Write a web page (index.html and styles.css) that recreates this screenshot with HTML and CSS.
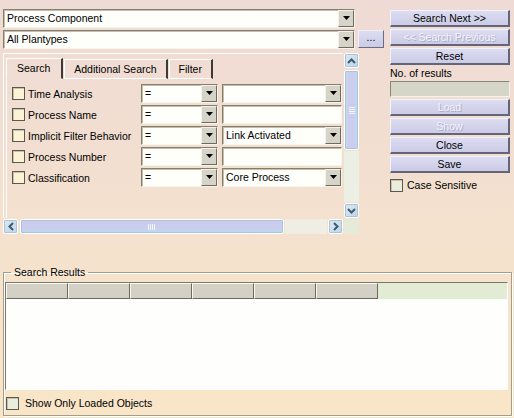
FILE: index.html
```html
<!DOCTYPE html>
<html>
<head>
<meta charset="utf-8">
<link rel="stylesheet" href="styles.css">
</head>
<body>
<div class="app">
  <div class="top">
    <div class="left">
      <div class="combo big">
        <span class="txt">Process Component</span>
        <span class="btn"><svg width="7" height="5" viewBox="0 0 7 5"><path d="M0 0H7L3.5 4Z" fill="#000"/></svg></span>
      </div>
      <div class="row2">
        <div class="combo big">
          <span class="txt">All Plantypes</span>
          <span class="btn"><svg width="7" height="5" viewBox="0 0 7 5"><path d="M0 0H7L3.5 4Z" fill="#000"/></svg></span>
        </div>
        <div class="dots">...</div>
      </div>
      <div class="tabarea">
        <div class="viewport">
          <div class="tabs">
            <div class="tab sel">Search</div>
            <div class="tab">Additional Search</div>
            <div class="tab">Filter</div>
          </div>
          <div class="pane">
            <div class="frow">
              <span class="cb"></span><span class="lbl">Time Analysis</span>
              <div class="combo op"><span class="txt">=</span><span class="btn"><svg width="7" height="5" viewBox="0 0 7 5"><path d="M0 0H7L3.5 4Z" fill="#000"/></svg></span></div>
              <div class="combo val"><span class="txt"></span><span class="btn"><svg width="7" height="5" viewBox="0 0 7 5"><path d="M0 0H7L3.5 4Z" fill="#000"/></svg></span></div>
            </div>
            <div class="frow">
              <span class="cb"></span><span class="lbl">Process Name</span>
              <div class="combo op"><span class="txt">=</span><span class="btn"><svg width="7" height="5" viewBox="0 0 7 5"><path d="M0 0H7L3.5 4Z" fill="#000"/></svg></span></div>
              <div class="combo val"><span class="txt"></span></div>
            </div>
            <div class="frow">
              <span class="cb"></span><span class="lbl">Implicit Filter Behavior</span>
              <div class="combo op"><span class="txt">=</span><span class="btn"><svg width="7" height="5" viewBox="0 0 7 5"><path d="M0 0H7L3.5 4Z" fill="#000"/></svg></span></div>
              <div class="combo val"><span class="txt">Link Activated</span><span class="btn"><svg width="7" height="5" viewBox="0 0 7 5"><path d="M0 0H7L3.5 4Z" fill="#000"/></svg></span></div>
            </div>
            <div class="frow">
              <span class="cb"></span><span class="lbl">Process Number</span>
              <div class="combo op"><span class="txt">=</span><span class="btn"><svg width="7" height="5" viewBox="0 0 7 5"><path d="M0 0H7L3.5 4Z" fill="#000"/></svg></span></div>
              <div class="combo val"><span class="txt"></span></div>
            </div>
            <div class="frow">
              <span class="cb"></span><span class="lbl">Classification</span>
              <div class="combo op"><span class="txt">=</span><span class="btn"><svg width="7" height="5" viewBox="0 0 7 5"><path d="M0 0H7L3.5 4Z" fill="#000"/></svg></span></div>
              <div class="combo val"><span class="txt">Core Process</span><span class="btn"><svg width="7" height="5" viewBox="0 0 7 5"><path d="M0 0H7L3.5 4Z" fill="#000"/></svg></span></div>
            </div>
          </div>
        </div>
        <div class="vscroll">
          <div class="sbtn"><svg width="9" height="6" viewBox="0 0 9 6"><path d="M1 5L4.5 1.5L8 5" fill="none" stroke="#3e5a72" stroke-width="2"/></svg></div>
          <div class="vthumb"><span class="grip"></span></div>
          <div class="vtrack"></div>
          <div class="sbtn"><svg width="9" height="6" viewBox="0 0 9 6"><path d="M1 1L4.5 4.5L8 1" fill="none" stroke="#3e5a72" stroke-width="2"/></svg></div>
        </div>
        <div class="hscroll">
          <div class="sbtn"><svg width="6" height="9" viewBox="0 0 6 9"><path d="M5 1L1.5 4.5L5 8" fill="none" stroke="#3e5a72" stroke-width="2"/></svg></div>
          <div class="hthumb"><span class="hgrip"></span></div>
          <div class="htrack"></div>
          <div class="sbtn"><svg width="6" height="9" viewBox="0 0 6 9"><path d="M1 1L4.5 4.5L1 8" fill="none" stroke="#3e5a72" stroke-width="2"/></svg></div>
        </div>
        <div class="corner"></div>
      </div>
    </div>
    <div class="right">
      <div class="pbtn">Search Next &gt;&gt;</div>
      <div class="pbtn dis">&lt;&lt; Search Previous</div>
      <div class="pbtn">Reset</div>
      <div class="nlabel">No. of results</div>
      <div class="nbox"></div>
      <div class="pbtn dis">Load</div>
      <div class="pbtn dis">Show</div>
      <div class="pbtn">Close</div>
      <div class="pbtn">Save</div>
      <div class="case"><span class="cb green"></span><span>Case Sensitive</span></div>
    </div>
  </div>
  <fieldset class="results">
    <legend>Search Results</legend>
    <div class="table">
      <div class="thead">
        <div class="th"></div><div class="th"></div><div class="th"></div><div class="th"></div><div class="th"></div><div class="th"></div><div class="tfill"></div>
      </div>
      <div class="tbody"></div>
    </div>
    <div class="loaded"><span class="cb green"></span><span>Show Only Loaded Objects</span></div>
  </fieldset>
</div>
</body>
</html>
```
FILE: styles.css
```css
* { box-sizing: border-box; }
html, body { margin: 0; padding: 0; }
body {
  width: 514px;
  height: 418px;
  overflow: hidden;
  font: 10.5px "Liberation Sans", Arial, sans-serif;
  color: #000;
  background: linear-gradient(180deg, #efdbd5 0%, #f2dfd0 40%, #f7e4cb 75%, #f9e6c8 100%);
}
.app { display: flex; flex-direction: column; height: 418px; }
.top { display: flex; height: 262px; }
.left { width: 387px; padding: 9px 0 0 3px; display: flex; flex-direction: column; }
.right { margin-left: 3px; width: 120px; padding-top: 10px; display: flex; flex-direction: column; gap: 2px; }

/* combo boxes */
.combo {
  display: flex;
  height: 19px;
  background: #fefefb;
  border: 1px solid;
  border-color: #847e6c #f6f6ec #f6f6ec #847e6c;
  box-shadow: inset 1px 1px 0 #c4beac;
}
.combo.big { width: 352px; }
.combo .txt { flex: 1; padding: 0 0 0 3px; line-height: 17px; white-space: nowrap; overflow: hidden; }
.combo .btn {
  width: 16px;
  height: 17px;
  background: #d6d3c9;
  border: 1px solid;
  border-color: #f2f2ea #6e6a5e #6e6a5e #f2f2ea;
  display: flex;
  align-items: center;
  justify-content: center;
}
.row2 { display: flex; margin-top: 2px; }
.dots {
  margin-left: 3px;
  width: 26px;
  height: 18px;
  background: linear-gradient(#dcdcf2, #cbcbe6);
  border: 1px solid;
  border-color: #f0f0fa #6c6c80 #6c6c80 #f0f0fa;
  text-align: center;
  line-height: 13px;
}

/* tab area */
.tabarea {
  margin-top: 4px;
  display: grid;
  grid-template-columns: 340px 15px;
  grid-template-rows: 165px 15px;
  column-gap: 1px;
  row-gap: 1px;
}
.viewport {
  overflow: hidden;
  border-left: 1px solid #fff;
  border-top: 1px solid #fff;
  padding: 4px 0 0 2px;
}
.tabs { display: flex; height: 21px; }
.tab {
  padding: 0 9px;
  line-height: 19px;
  border-left: 1px solid #fff;
  border-top: 1px solid #fff;
  border-right: 2px solid #3c3a36;
  border-bottom: 1px solid #fff;
  margin-top: 1px;
  margin-right: 1px;
  white-space: nowrap;
}
.tab.sel { border-bottom-color: transparent; margin-top: 0; padding: 0 11px 0 10px; }
.pane {
  border-left: 1px solid #fff;
  height: 200px;
  padding: 5px 0 0 5px;
  display: flex;
  flex-direction: column;
  gap: 2px;
}
.frow { display: flex; align-items: center; height: 19px; }
.cb {
  display: inline-block;
  flex: none;
  width: 13px;
  height: 13px;
  background: #fbf3d4;
  border: 1px solid #5a5850;
  box-shadow: inset 1px 1px 0 #c8c2ac;
}
.cb.green { background: #e9eedc; }
.frow .lbl { width: 116px; padding-left: 3px; white-space: nowrap; line-height: 14px; }
.combo.op { width: 77px; }
.combo.val { width: 120px; margin-left: 4px; flex: none; }

/* scrollbars */
.sbtn {
  width: 15px;
  height: 15px;
  background: linear-gradient(135deg, #dde8f2, #bed6e8);
  border: 1px solid #fff;
  border-radius: 2px;
  box-shadow: 0 0 0 1px #a8c4d8 inset;
  display: flex;
  align-items: center;
  justify-content: center;
  flex: none;
}
.vscroll { display: flex; flex-direction: column; gap: 1px; }
.vthumb {
  height: 80px;
  background: linear-gradient(90deg, #bfe0ee 0%, #cccdee 30%, #cccdee 70%, #bcdeec 100%);
  border: 1px solid #fff;
  border-radius: 2px;
  box-shadow: 0 0 0 1px #a8c4d8 inset;
  margin-top: 1px;
  display: flex;
  align-items: center;
  justify-content: center;
}
.grip { width: 6px; height: 7px; background: repeating-linear-gradient(180deg, #f4f6fc 0 1px, transparent 1px 2px); }
.vtrack { flex: 1; background: #ecefe3; }
.hscroll { display: flex; gap: 1px; }
.hthumb {
  width: 264px;
  background: linear-gradient(180deg, #cccdee 0%, #cccdee 60%, #b8dcec 100%);
  border: 1px solid #fff;
  border-radius: 2px;
  box-shadow: 0 0 0 1px #a8c4d8 inset;
  margin-left: 1px;
  display: flex;
  align-items: center;
  justify-content: flex-end;
  padding-right: 128px;
}
.hgrip { width: 7px; height: 6px; background: repeating-linear-gradient(90deg, #f4f6fc 0 1px, transparent 1px 2px); }
.htrack { flex: 1; background: #f0eee4; }
.corner { background: #e6ead8; }

/* right buttons */
.pbtn {
  height: 17px;
  line-height: 14px;
  text-align: center;
  background: linear-gradient(#dcdcf2, #cbcbe6);
  border-style: solid;
  border-width: 1px 2px 2px 1px;
  border-color: #f2f2fb #64647a #64647a #f2f2fb;
  white-space: nowrap;
}
.pbtn.dis { color: #f4f4fb; text-shadow: 1px 1px 0 #acacc6; }
.nlabel { height: 13px; line-height: 13px; }
.nbox {
  height: 16px;
  margin-top: -1px;
  background: #d5d6c8;
  border: 1px solid;
  border-color: #8a8676 #f4f4ea #f4f4ea #8a8676;
}
.case { display: flex; align-items: center; gap: 4px; margin-top: 3px; height: 14px; }

/* results */
.results {
  margin: 4px 2px 0 3px;
  padding: 3px 3px 4px 1px;
  height: 150px;
  border: 1px solid #a39d8b;
  box-shadow: inset 1px 1px 0 #fff, 1px 1px 0 #fff;
  min-width: 0;
}
.results legend { padding: 0 3px; margin-left: 6px; line-height: 13px; }
.table {
  border: 1px solid;
  border-color: #7c7666 #fff #fff #7c7666;
}
.thead { display: flex; height: 16px; }
.th {
  width: 62px;
  background: #d3d0c6;
  border: 1px solid;
  border-color: #fafaf4 #6c685c #6c685c #fafaf4;
}
.tfill { flex: 1; background: #e2ebd3; }
.tbody { height: 90px; background: #fefefc; }
.loaded { display: flex; align-items: center; gap: 6px; margin-top: 6px; height: 14px; padding-left: 1px; }
```
